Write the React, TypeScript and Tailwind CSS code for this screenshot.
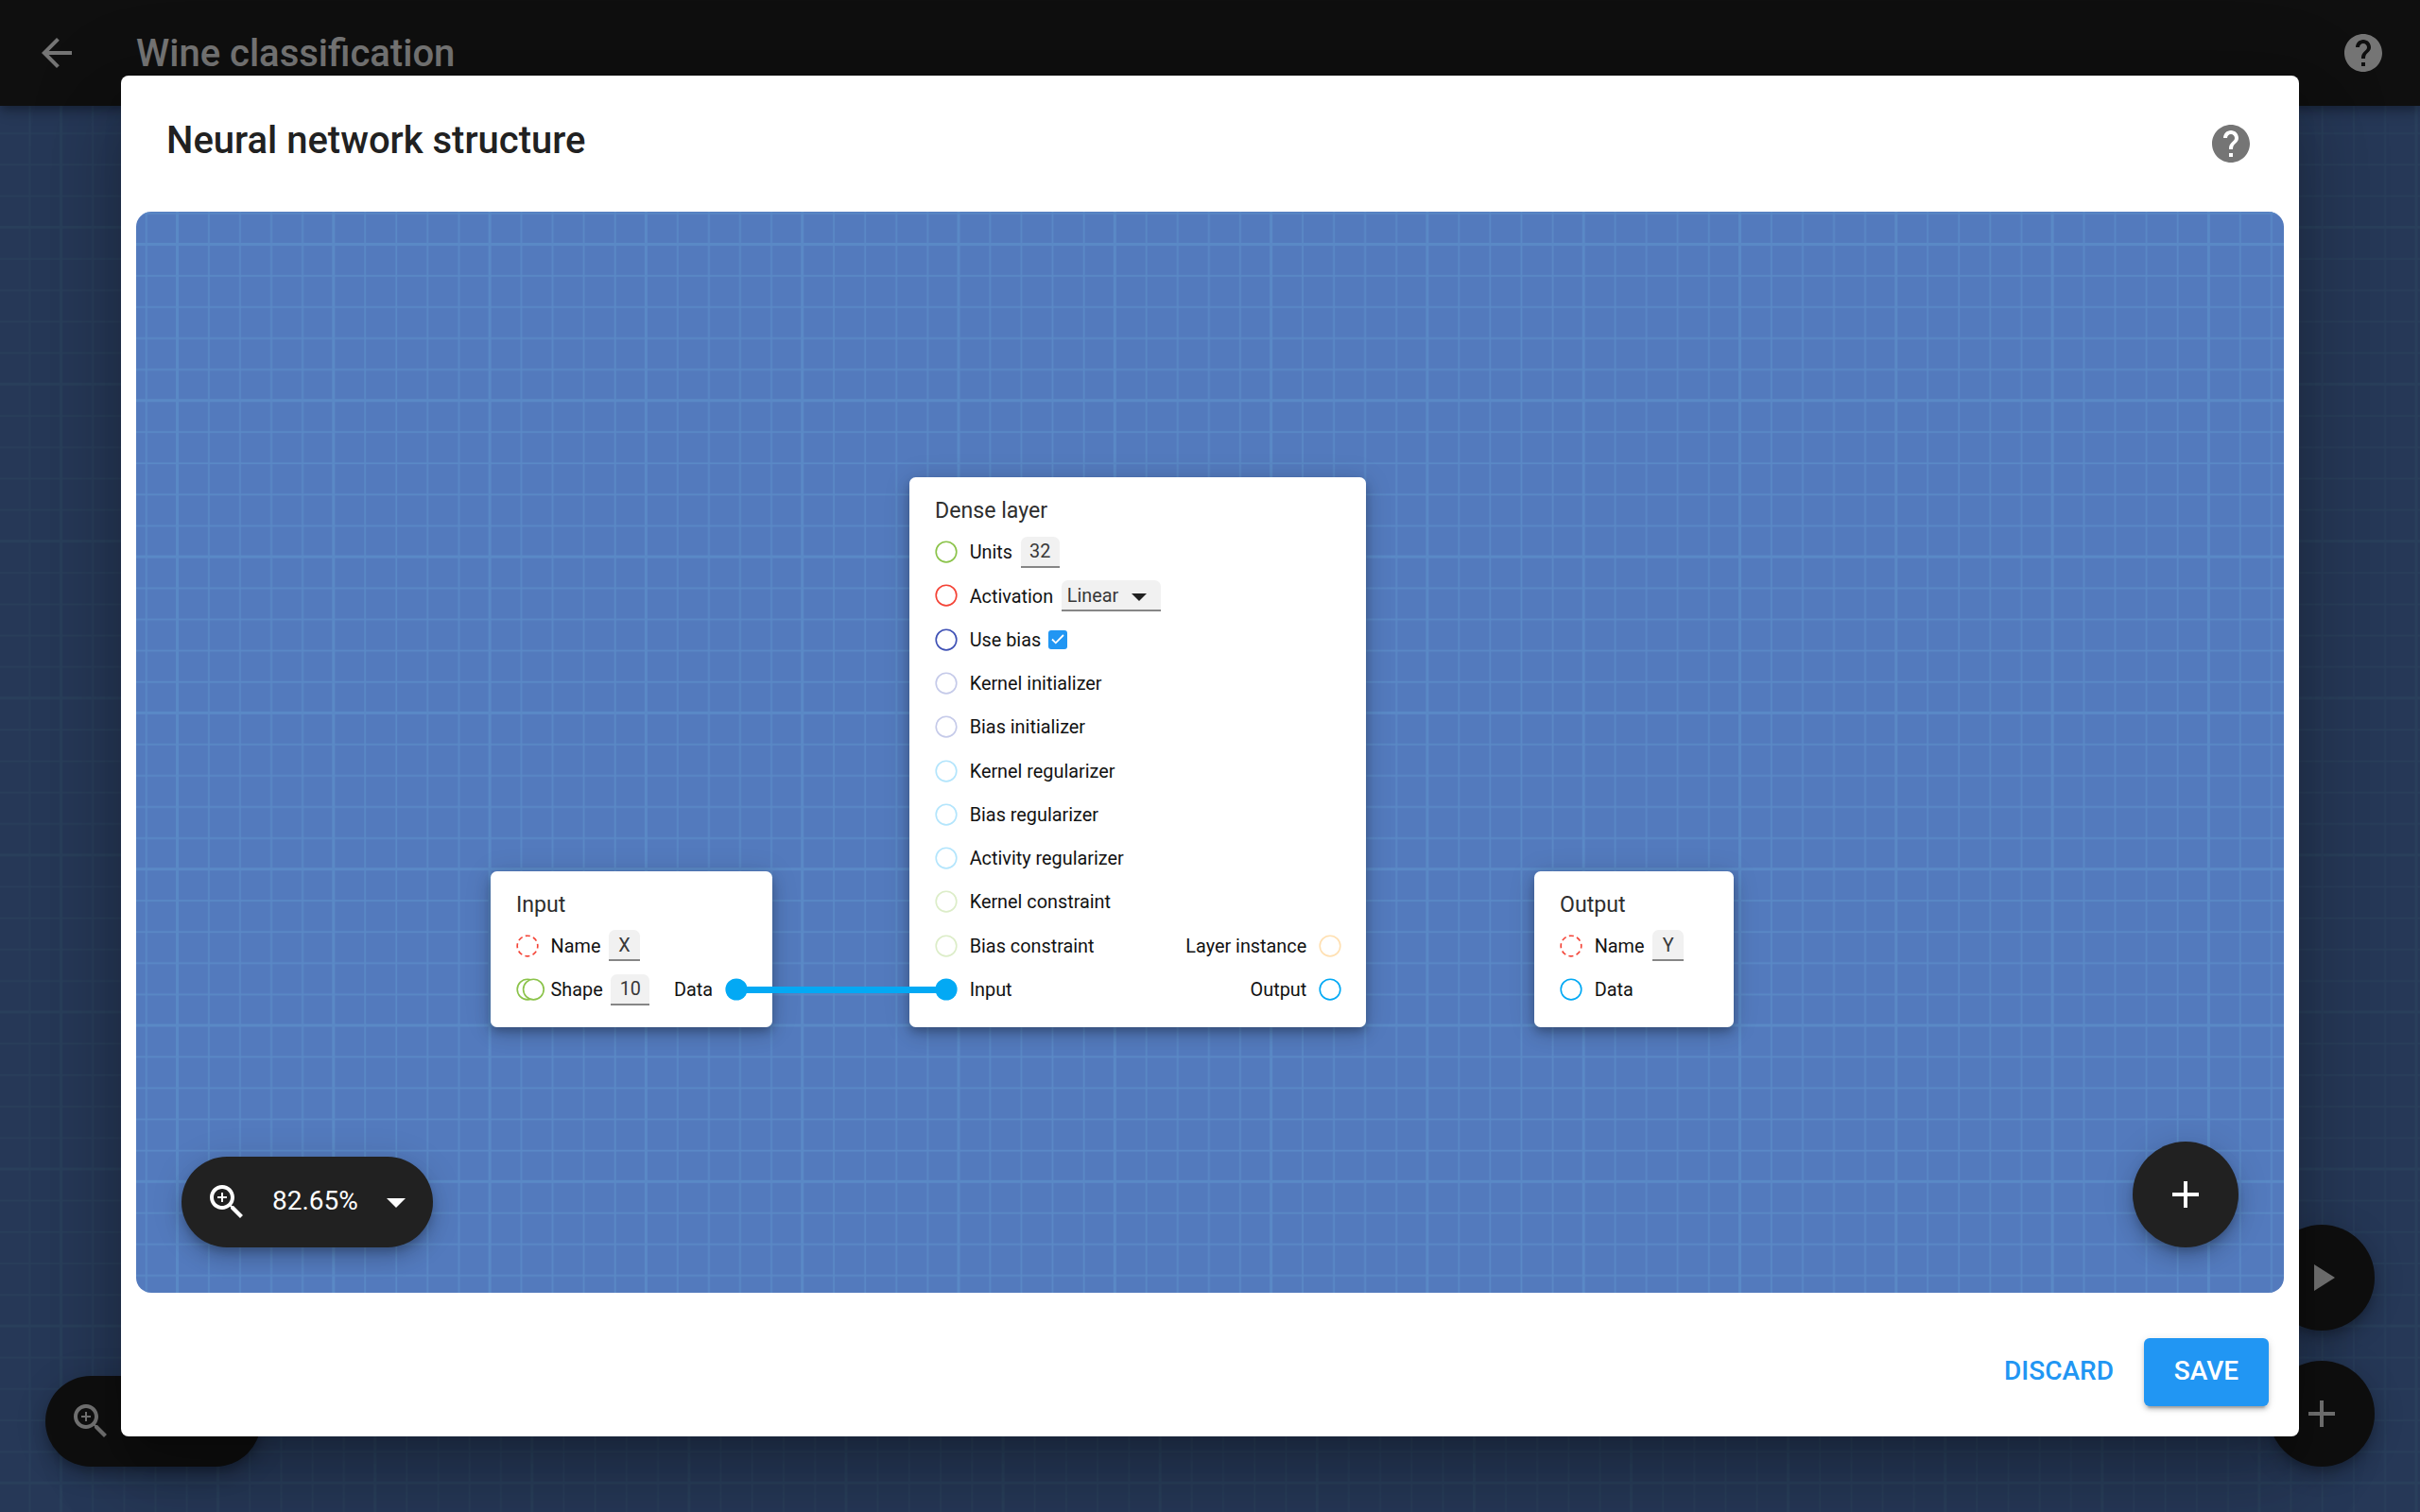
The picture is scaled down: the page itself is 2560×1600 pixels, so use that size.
import React from "react";

type Port = {
  label: string;
  color: string;
  kind?: "ring" | "dashed" | "double" | "solid";
};

function Ring({ color, kind = "ring" }: { color: string; kind?: Port["kind"] }) {
  const wide = kind === "double";
  return (
    <svg className="shrink-0 overflow-visible" width={24} height={24} viewBox="0 0 24 24" fill="none">
      {kind === "solid" && <circle cx={12} cy={12} r={11.6} fill={color} />}
      {kind === "dashed" && (
        <circle cx={12} cy={12} r={10.8} stroke={color} strokeWidth={1.65} strokeDasharray="5.1 3.38" strokeDashoffset={2.55} />
      )}
      {(kind === "ring" || wide) && <circle cx={12} cy={12} r={10.8} stroke={color} strokeWidth={1.65} />}
      {wide && <circle cx={18.4} cy={12} r={10.8} stroke={color} strokeWidth={1.65} fill="#fff" />}
    </svg>
  );
}

function Row({ left, right, children }: { left: Port; right?: Port; children?: React.ReactNode }) {
  return (
    <div className="flex h-[46.28px] items-center text-[19.84px] text-[#121212]">
      <Ring color={left.color} kind={left.kind} />
      <span className="ml-[13px] pt-[2px]">{left.label}</span>
      {children}
      {right && (
        <span className="ml-auto flex items-center">
          <span className="mr-[12.6px] pt-[2px]">{right.label}</span>
          <Ring color={right.color} kind={right.kind} />
        </span>
      )}
    </div>
  );
}

function Card({ title, className, children }: { title: string; className: string; children: React.ReactNode }) {
  return (
    <section
      className={`absolute rounded-[6.6px] bg-white pl-[26.4px] pr-[26px] pt-[20.1px] shadow-[0_5px_8.5px_-1.6px_rgba(0,0,0,0.2),0_8px_16.5px_0_rgba(0,0,0,0.14),0_2px_30px_0_rgba(0,0,0,0.12)] ${className}`}
    >
      <h2 className="h-[36px] pl-[0.4px] text-[23.14px] leading-[32px] text-[#2e2e2e]">{title}</h2>
      {children}
    </section>
  );
}

function Field({ className, children }: { className: string; children: React.ReactNode }) {
  return (
    <span
      className={`flex h-[33px] items-center rounded-t-[6.6px] border-b-2 border-[#868686] bg-[#f1f1f1] pt-[2px] text-[#383838] ${className}`}
    >
      {children}
    </span>
  );
}

function HelpIcon({ className }: { className: string }) {
  return (
    <svg viewBox="0 0 24 24" width={48} height={48} fill="currentColor" className={className}>
      <path d="M12 2C6.48 2 2 6.48 2 12s4.48 10 10 10 10-4.480 10-10S17.520 2 12 2zm1 17h-2v-2h2v2zm2.070-7.750l-.9.920C13.450 12.900 13 13.500 13 15h-2v-.5c0-1.100.450-2.100 1.170-2.830l1.240-1.260c.370-.360.590-.860.590-1.410 0-1.100-.9-2-2-2s-2 .9-2 2H8c0-2.210 1.790-4 4-4s4 1.790 4 4c0 .880-.360 1.680-.930 2.250z" />
    </svg>
  );
}

function ZoomIcon() {
  return (
    <svg viewBox="0 0 24 24" width={48} height={48} fill="currentColor">
      <path d="M15.500 14h-.790l-.280-.270C15.410 12.590 16 11.110 16 9.500 16 5.910 13.090 3 9.500 3S3 5.910 3 9.500 5.910 16 9.500 16c1.610 0 3.090-.590 4.230-1.570l.270.280v.790l5 4.990L20.490 19l-4.990-5zm-6 0C7.010 14 5 11.990 5 9.500S7.010 5 9.500 5 14 7.010 14 9.500 11.990 14 9.500 14zM12 10h-2v2H9v-2H7V9h2V7h1v2h2v1z" />
    </svg>
  );
}

function PlusIcon() {
  return (
    <svg viewBox="0 0 24 24" width={48} height={48} fill="currentColor">
      <path d="M19 13h-6v6h-2v-6H5v-2h6V5h2v6h6v2z" />
    </svg>
  );
}

const floating =
  "bg-[#212121] text-white shadow-[0_6px_10px_-2px_rgba(0,0,0,0.2),0_12px_20px_0_rgba(0,0,0,0.14),0_2px_36px_0_rgba(0,0,0,0.12)]";

function Grid({ id, x, y, tile }: { id: string; x: number; y: number; tile: number }) {
  const step = tile / 5;
  return (
    <svg className="absolute inset-0 h-full w-full">
      <defs>
        <pattern id={id} x={x} y={y} width={tile} height={tile} patternUnits="userSpaceOnUse">
          <g fill="#5a89c6">
            <rect x={0} y={0} width={3} height={tile} />
            <rect x={0} y={0} width={tile} height={3} />
            {[1, 2, 3, 4].map((n) => (
              <g key={n}>
                <rect x={n * step + 1} y={0} width={1.7} height={tile} />
                <rect x={0} y={n * step + 1} width={tile} height={1.7} />
              </g>
            ))}
          </g>
        </pattern>
      </defs>
      <rect width="100%" height="100%" fill={`url(#${id})`} />
    </svg>
  );
}

const denseTail: Port[] = [
  { label: "Kernel initializer", color: "#c5cae9" },
  { label: "Bias initializer", color: "#c5cae9" },
  { label: "Kernel regularizer", color: "#b3e5fc" },
  { label: "Bias regularizer", color: "#b3e5fc" },
  { label: "Activity regularizer", color: "#b3e5fc" },
  { label: "Kernel constraint", color: "#dcedc8" },
];

export default function App() {
  return (
    <div className="relative h-[1600px] w-[2560px] overflow-hidden bg-[#537abd] font-[Roboto,sans-serif] text-[#212121]">
      <Grid id="workspace" x={63} y={72.8} tile={166.1} />
      <header className="relative flex h-28 items-center bg-[#212121] px-9 text-white shadow-[0_4px_8px_-2px_rgba(0,0,0,0.2),0_8px_10px_0_rgba(0,0,0,0.14),0_2px_20px_0_rgba(0,0,0,0.12)]">
        <svg viewBox="0 0 24 24" width={48} height={48} fill="currentColor">
          <path d="M20 11H7.830l5.590-5.590L12 4l-8 8 8 8 1.410-1.410L7.830 13H20v-2z" />
        </svg>
        <h1 className="ml-[60px] pt-[2px] text-[40px] font-medium">Wine classification</h1>
        <HelpIcon className="ml-auto" />
      </header>

      <div className={`absolute bottom-12 left-12 flex h-24 w-[228px] items-center rounded-full pl-6 ${floating}`}>
        <ZoomIcon />
      </div>
      <div className="absolute bottom-12 right-12 flex flex-col gap-8">
        <button className={`grid size-28 place-items-center rounded-full ${floating}`}>
          <svg viewBox="0 0 24 24" width={48} height={48} fill="currentColor">
            <path d="M8 5v14l11-7z" />
          </svg>
        </button>
        <button className={`grid size-28 place-items-center rounded-full ${floating}`}>
          <PlusIcon />
        </button>
      </div>

      <div className="absolute inset-0 bg-black/54" />

      <main className="absolute inset-x-32 inset-y-20 flex flex-col rounded-lg bg-white shadow-[0_22px_30px_-14px_rgba(0,0,0,0.2),0_48px_76px_6px_rgba(0,0,0,0.14),0_18px_92px_16px_rgba(0,0,0,0.12)]">
        <div className="flex h-36 items-center justify-between pl-12 pr-12">
          <h2 className="mb-[6px] text-[40px] font-medium">Neural network structure</h2>
          <HelpIcon className="text-[#757575]" />
        </div>

        <div className="relative mx-4 h-[1144px] overflow-hidden rounded-2xl bg-[#537abd]">
          <Grid id="canvas" x={42} y={33} tile={165.3} />

          <Card title="Input" className="left-[375.200px] top-[697.600px] h-[165px] w-[297.500px]">
            <Row left={{ label: "Name", color: "#f44336", kind: "dashed" }}>
              <Field className="ml-[8.600px] w-[33px] justify-center">X</Field>
            </Row>
            <Row
              left={{ label: "Shape", color: "#8bc34a", kind: "double" }}
              right={{ label: "Data", color: "#03a9f4", kind: "solid" }}
            >
              <Field className="ml-[8.600px] w-[41px] justify-center">10</Field>
            </Row>
          </Card>

          <Card title="Dense layer" className="left-[818.300px] top-[281px] h-[581.600px] w-[482.500px]">
            <Row left={{ label: "Units", color: "#8bc34a" }}>
              <Field className="ml-[8.600px] w-[41px] justify-center">32</Field>
            </Row>
            <Row left={{ label: "Activation", color: "#f44336" }}>
              <Field className="ml-[8.600px] w-[105px] pl-[6px]">
                Linear
                <svg width={16} height={8} viewBox="0 0 16 8" className="ml-[14px] mt-[3px]">
                  <path d="M0 0h16L8 8z" fill="#212121" />
                </svg>
              </Field>
            </Row>
            <Row left={{ label: "Use bias", color: "#3f51b5" }}>
              <span className="ml-[8px] grid size-[20px] place-items-center rounded-[3px] bg-[#2196f3]">
                <svg width={14} height={11} viewBox="0 0 14 11" fill="none" stroke="#fff" strokeWidth={1.8}>
                  <path d="M1 5.500l3.800 3.800L13 1" />
                </svg>
              </span>
            </Row>
            {denseTail.map((port) => (
              <Row key={port.label} left={port} />
            ))}
            <Row
              left={{ label: "Bias constraint", color: "#dcedc8" }}
              right={{ label: "Layer instance", color: "#ffe0b2" }}
            />
            <Row
              left={{ label: "Input", color: "#03a9f4", kind: "solid" }}
              right={{ label: "Output", color: "#03a9f4" }}
            />
          </Card>

          <Card title="Output" className="left-[1479.300px] top-[697.600px] h-[165px] w-[210.400px]">
            <Row left={{ label: "Name", color: "#f44336", kind: "dashed" }}>
              <Field className="ml-[8.600px] w-[33px] justify-center">Y</Field>
            </Row>
            <Row left={{ label: "Data", color: "#03a9f4" }} />
          </Card>

          <svg className="absolute left-[635px] top-[820px]" width={222} height={7}>
            <rect width={222} height={7} fill="#03a9f4" />
          </svg>

          <div className={`absolute bottom-12 left-12 flex h-24 w-[266px] items-center rounded-full pl-6 ${floating}`}>
            <ZoomIcon />
            <span className="mb-[2px] ml-6 text-[28px]">82.65%</span>
            <svg width={20} height={10} viewBox="0 0 20 10" className="ml-[30px] mt-[2px]">
              <path d="M0 0h20L10 10z" fill="currentColor" />
            </svg>
          </div>
          <button className={`absolute bottom-12 right-12 grid size-28 place-items-center rounded-full ${floating}`}>
            <PlusIcon />
          </button>
        </div>

        <div className="flex flex-1 items-end justify-end pb-8 pr-8">
          <button className="mr-8 h-[72px] pb-[2px] text-[28px] font-medium text-[#2196f3]">DISCARD</button>
          <button className="h-[72px] w-[132px] rounded-md bg-[#2196f3] pb-[2px] text-[28px] font-medium text-white shadow-[0_6px_2px_-4px_rgba(0,0,0,0.2),0_4px_4px_0_rgba(0,0,0,0.14),0_2px_10px_0_rgba(0,0,0,0.12)]">
            SAVE
          </button>
        </div>
      </main>
    </div>
  );
}
